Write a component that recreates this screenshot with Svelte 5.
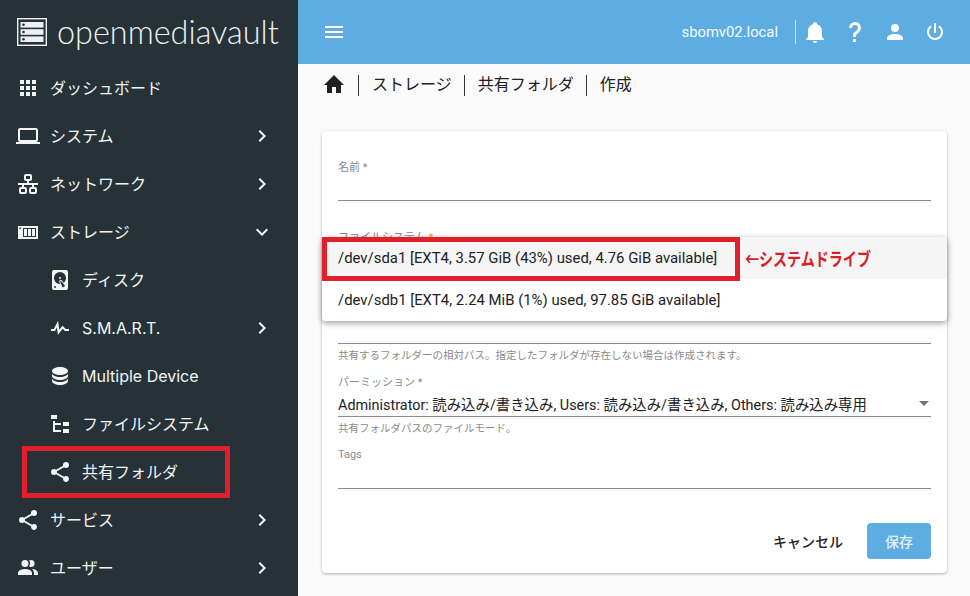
<script lang="ts">
	const ICONS: Record<string, string> = {
		apps: 'M16,20H20V16H16M16,14H20V10H16M10,8H14V4H10M16,8H20V4H16M10,14H14V10H10M4,14H8V10H4M4,20H8V16H4M10,20H14V16H10M4,8H8V4H4V8Z',
		laptop: 'M4,6H20V16H4M20,18A2,2 0 0,0 22,16V6C22,4.89 21.1,4 20,4H4C2.89,4 2,4.89 2,6V16A2,2 0 0,0 4,18H0V20H24V18H20Z',
		lan: 'M10,2C8.89,2 8,2.89 8,4V7C8,8.11 8.89,9 10,9H11V11H2V13H6V15H5C3.89,15 3,15.89 3,17V20C3,21.11 3.89,22 5,22H9C10.11,22 11,21.11 11,20V17C11,15.89 10.11,15 9,15H8V13H16V15H15C13.89,15 13,15.89 13,17V20C13,21.11 13.89,22 15,22H19C20.11,22 21,21.11 21,20V17C21,15.89 20.11,15 19,15H18V13H22V11H13V9H14C15.11,9 16,8.11 16,7V4C16,2.89 15.11,2 14,2H10M10,4H14V7H10V4M5,17H9V20H5V17M15,17H19V20H15V17Z',
		storage: 'M2,6H22V19H2Z M7,8H20V17H7Z M8,9H11V16H8Z M12,9H15V16H12Z M16,9H19V16H16Z M3.5,7.5H5V9H3.5Z',
		disk: 'M6,2H18A2,2 0 0,1 20,4V20A2,2 0 0,1 18,22H6A2,2 0 0,1 4,20V4A2,2 0 0,1 6,2M12,4A6,6 0 0,0 6,10C6,13.31 8.69,16 12.1,16L11.22,13.77C10.95,13.29 11.11,12.68 11.59,12.4L12.45,11.9C12.93,11.63 13.54,11.79 13.82,12.27L15.74,14.69C17.12,13.59 18,11.9 18,10A6,6 0 0,0 12,4M12,9A1,1 0 0,1 13,10A1,1 0 0,1 12,11A1,1 0 0,1 11,10A1,1 0 0,1 12,9M7,18A1,1 0 0,0 6,19A1,1 0 0,0 7,20A1,1 0 0,0 8,19A1,1 0 0,0 7,18M12.09,13.27L14.58,19.58L17.17,18.08L12.95,12.77L12.09,13.27Z',
		pulse: 'M3,13H5.79L10.1,4.79L11.28,13.75L14.5,9.66L17.83,13H21V15H17L14.67,12.67L9.92,18.73L8.94,11.31L7,15H3V13Z',
		database: 'M12,3C7.58,3 4,4.79 4,7C4,9.21 7.58,11 12,11C16.42,11 20,9.21 20,7C20,4.79 16.42,3 12,3M4,9V12C4,14.21 7.58,16 12,16C16.42,16 20,14.21 20,12V9C20,11.21 16.42,13 12,13C7.58,13 4,11.21 4,9M4,14V17C4,19.21 7.58,21 12,21C16.42,21 20,19.21 20,17V14C20,16.21 16.42,18 12,18C7.58,18 4,16.21 4,14Z',
		tree: 'M3,3H9V7H3V3M15,10H21V14H15V10M15,17H21V21H15V17M13,13H7V18H13V20H7L5,20V9H7V11H13V13Z',
		share: 'M18,16.08C17.24,16.08 16.56,16.38 16.04,16.85L8.91,12.7C8.96,12.47 9,12.24 9,12C9,11.76 8.96,11.53 8.91,11.3L15.96,7.19C16.5,7.69 17.21,8 18,8A3,3 0 0,0 21,5A3,3 0 0,0 18,2A3,3 0 0,0 15,5C15,5.24 15.04,5.47 15.09,5.7L8.04,9.81C7.5,9.31 6.79,9 6,9A3,3 0 0,0 3,12A3,3 0 0,0 6,15C6.79,15 7.5,14.69 8.04,14.19L15.16,18.34C15.11,18.55 15.08,18.77 15.08,19C15.08,20.61 16.39,21.91 18,21.91C19.61,21.91 20.92,20.61 20.92,19A2.92,2.92 0 0,0 18,16.08Z',
		users: 'M16 17V19H2V17S2 13 9 13 16 17 16 17M12.5 7.5A3.5 3.5 0 1 0 9 11A3.5 3.5 0 0 0 12.5 7.5M15.94 13A5.32 5.32 0 0 1 18 17V19H22V17S22 13.37 15.94 13M15 4A3.39 3.39 0 0 0 13.07 4.59A5 5 0 0 1 13.07 10.41A3.39 3.39 0 0 0 15 11A3.5 3.5 0 0 0 15 4Z',
		right: 'M8.59,16.58L13.17,12L8.59,7.41L10,6L16,12L10,18L8.59,16.58Z',
		down: 'M7.41,8.58L12,13.17L16.59,8.58L18,10L12,16L6,10L7.41,8.58Z',
		menu: 'M3,6H21V8H3V6M3,11H21V13H3V11M3,16H21V18H3V16Z',
		bell: 'M21,19V20H3V19L5,17V11C5,7.9 7.03,5.17 10,4.29C10,4.19 10,4.1 10,4A2,2 0 0,1 12,2A2,2 0 0,1 14,4C14,4.1 14,4.19 14,4.29C16.97,5.17 19,7.9 19,11V17L21,19M14,21A2,2 0 0,1 12,23A2,2 0 0,1 10,21',
		help: 'M10,19H13V22H10V19M12,2C17.35,2.22 19.68,7.62 16.5,11.67C15.67,12.67 14.33,13.33 13.67,14.17C13,15 13,16 13,17H10C10,15.33 10,13.92 10.67,12.92C11.33,11.92 12.67,11.33 13.5,10.67C15.92,8.43 15.32,5.26 12,5A3,3 0 0,0 9,8H6A6,6 0 0,1 12,2Z',
		account: 'M12,4A4,4 0 0,1 16,8A4,4 0 0,1 12,12A4,4 0 0,1 8,8A4,4 0 0,1 12,4M12,14C16.42,14 20,15.79 20,18V20H4V18C4,15.79 7.58,14 12,14Z',
		power: 'M16.56,5.44L15.11,6.89C16.84,7.94 18,9.83 18,12A6,6 0 0,1 12,18A6,6 0 0,1 6,12C6,9.83 7.16,7.94 8.88,6.88L7.44,5.44C5.36,6.88 4,9.28 4,12A8,8 0 0,0 12,20A8,8 0 0,0 20,12C20,9.28 18.64,6.88 16.56,5.44M13,3H11V13H13',
		home: 'M10,20V14H14V20H19V12H22L12,2L2,12H5V20H10Z'
	};

	const nav = [
		{ label: 'ダッシュボード', icon: 'apps' },
		{ label: 'システム', icon: 'laptop', arrow: 'right' },
		{ label: 'ネットワーク', icon: 'lan', arrow: 'right' },
		{ label: 'ストレージ', icon: 'storage', arrow: 'down' },
		{ label: 'ディスク', icon: 'disk', sub: true },
		{ label: 'S.M.A.R.T.', icon: 'pulse', sub: true, arrow: 'right', latin: true },
		{ label: 'Multiple Device', icon: 'database', sub: true, latin: true },
		{ label: 'ファイルシステム', icon: 'tree', sub: true },
		{ label: '共有フォルダ', icon: 'share', sub: true },
		{ label: 'サービス', icon: 'share', arrow: 'right' },
		{ label: 'ユーザー', icon: 'users', arrow: 'right' }
	];

	const crumbs = ['ストレージ', '共有フォルダ', '作成'];
</script>

{#snippet icon(name: string, cls = '')}
	<svg class="icon {cls}" viewBox="0 0 24 24" aria-hidden="true"><path fill-rule="evenodd" d={ICONS[name]} /></svg>
{/snippet}

<div class="page">
	<aside class="sidebar">
		<div class="brand">
			<svg class="logo" viewBox="0 0 30 28" aria-hidden="true">
				<rect x="0.7" y="0.7" width="28.6" height="26.6" fill="none" stroke="#eef1f2" stroke-width="1.4" />
				<rect x="3.5" y="4" width="23" height="5.6" fill="#eef1f2" />
				<rect x="3.5" y="11.2" width="23" height="5.6" fill="#eef1f2" />
				<rect x="3.5" y="18.4" width="23" height="5.6" fill="#eef1f2" />
				<circle cx="6.5" cy="6.8" r="1.3" fill="#263238" />
				<circle cx="6.5" cy="14" r="1.3" fill="#263238" />
				<circle cx="6.5" cy="21.2" r="1.3" fill="#263238" />
			</svg>
			<span class="brand-name">openmediavault</span>
		</div>
		<nav>
			{#each nav as item}
				<div class="nav-row" class:sub={item.sub}>
					{@render icon(item.icon, 'nav-icon')}
					<span class="nav-label" class:latin={item.latin}>{item.label}</span>
					{#if item.arrow}
						{@render icon(item.arrow, 'nav-arrow')}
					{/if}
				</div>
			{/each}
		</nav>
		<div class="mark mark-nav"></div>
	</aside>

	<main class="main">
		<header class="topbar">
			{@render icon('menu', 'top-menu')}
			<span class="host">sbomv02.local</span>
			<span class="top-sep"></span>
			{@render icon('bell', 'top-bell')}
			{@render icon('help', 'top-icon')}
			{@render icon('account', 'top-icon')}
			{@render icon('power', 'top-icon')}
		</header>

		<div class="crumbs">
			{@render icon('home', 'home')}
			{#each crumbs as crumb}
				<span class="crumb"><span class="crumb-text">{crumb}</span></span>
			{/each}
		</div>

		<section class="card">
			<div class="field f-name">
				<span class="label">名前 *</span>
				<div class="line"></div>
			</div>
			<div class="field f-fs">
				<span class="label">ファイルシステム <em>*</em></span>
			</div>
			<div class="field f-path">
				<div class="line"></div>
				<span class="hint">共有するフォルダーの相対パス。指定したフォルダが存在しない場合は作成されます。</span>
			</div>
			<div class="field f-perm">
				<span class="label">パーミッション *</span>
				<div class="select">
					<span>Administrator: 読み込み/書き込み, Users: 読み込み/書き込み, Others: 読み込み専用</span>
					<i class="caret"></i>
				</div>
				<div class="line"></div>
				<span class="hint">共有フォルダパスのファイルモード。</span>
			</div>
			<div class="field f-tags">
				<span class="label">Tags</span>
				<div class="line"></div>
			</div>
			<div class="actions">
				<button type="button" class="cancel">キャンセル</button>
				<button type="button" class="save">保存</button>
			</div>

			<div class="dropdown">
				<div class="option active">/dev/sda1 [EXT4, 3.57 GiB (43%) used, 4.76 GiB available]</div>
				<div class="option">/dev/sdb1 [EXT4, 2.24 MiB (1%) used, 97.85 GiB available]</div>
			</div>
			<div class="mark mark-option"></div>
			<span class="note">←システムドライブ</span>
		</section>
	</main>
</div>

<style>
	:global(body) {
		margin: 0;
		background: #fafafa;
	}

	.page {
		display: flex;
		width: 970px;
		height: 596px;
		overflow: hidden;
		font-family: Roboto, 'Noto Sans CJK JP', sans-serif;
	}

	.icon {
		display: block;
		fill: currentColor;
		flex: none;
	}

	.sidebar {
		position: relative;
		flex: none;
		width: 298px;
		background: #263238;
		color: #f2f5f6;
	}

	.brand {
		display: flex;
		align-items: center;
		gap: 10px;
		height: 64px;
		padding-left: 17px;
	}

	.logo {
		width: 30px;
		height: 28px;
		flex: none;
	}

	.brand-name {
		font-family: Lato, sans-serif;
		font-weight: 300;
		font-size: 32.4px;
		line-height: 1;
		color: #eef1f2;
	}

	.nav-row {
		display: flex;
		align-items: center;
		height: 48px;
		padding-left: 16px;
		font-family: Inter, 'Noto Sans CJK JP', sans-serif;
		font-size: 16px;
	}

	.nav-row.sub {
		padding-left: 48px;
	}

	:global(.nav-icon) {
		width: 24px;
		height: 24px;
	}

	.nav-label {
		margin-left: 10px;
		padding-bottom: 2px;
		flex: 1;
	}

	.nav-label.latin {
		padding-bottom: 0;
	}

	:global(.nav-arrow) {
		width: 24px;
		height: 24px;
		margin-right: 24px;
	}

	.mark {
		position: absolute;
		box-sizing: border-box;
		border: 5px solid #e0202c;
		pointer-events: none;
	}

	.mark-nav {
		left: 22px;
		top: 446px;
		width: 208px;
		height: 52px;
	}

	.main {
		flex: 1;
		min-width: 0;
	}

	.topbar {
		display: flex;
		align-items: center;
		height: 64px;
		padding: 0 23px 0 24px;
		background: #5dade2;
		color: #fff;
	}

	:global(.top-menu) {
		width: 24px;
		height: 24px;
		margin-right: auto;
	}

	.host {
		font-size: 14.8px;
		color: #f4f9fd;
	}

	.top-sep {
		width: 1px;
		height: 24px;
		margin: 0 7px 0 17px;
		background: rgb(255 255 255 / 0.7);
	}

	:global(.top-bell) {
		width: 24px;
		height: 24px;
	}

	:global(.top-icon) {
		width: 24px;
		height: 24px;
		margin-left: 16px;
	}

	.crumbs {
		display: flex;
		align-items: center;
		height: 42px;
		padding-left: 24px;
		color: #212121;
		font-size: 16px;
	}

	:global(.home) {
		width: 24px;
		height: 24px;
		margin-right: 12px;
	}

	.crumb {
		padding: 0 12px 0 13px;
		line-height: 21px;
		border-left: 1px solid #333;
	}

	.crumb-text {
		display: block;
		margin-top: -1px;
		margin-bottom: 1px;
	}

	.card {
		position: relative;
		box-sizing: border-box;
		width: 625px;
		height: 442px;
		margin: 25px 0 0 24px;
		padding: 0 16px;
		background: #fff;
		border-radius: 4px;
		box-shadow: 0 1px 3px rgb(0 0 0 / 0.3);
	}

	.field {
		display: flex;
		flex-direction: column;
	}

	.label {
		font-size: 11px;
		line-height: 14px;
		color: #8a8a8a;
	}

	.label em {
		font-style: normal;
		color: #f0a030;
	}

	.line {
		height: 1px;
		background: #8c8c8c;
	}

	.hint {
		margin-top: 5px;
		font-size: 10.5px;
		line-height: 14px;
		color: #8a8a8a;
	}

	.f-name {
		padding-top: 30px;
	}

	.f-name .line {
		margin-top: 25px;
	}

	.f-fs {
		padding-top: 30px;
	}

	.f-path {
		padding-top: 98px;
	}

	.f-perm {
		padding-top: 13px;
	}

	.select {
		display: flex;
		align-items: center;
		justify-content: space-between;
		height: 25px;
		margin-top: 1px;
		font-size: 14.4px;
		color: #212121;
	}

	.caret {
		width: 0;
		height: 0;
		margin-right: 2px;
		border: 5px solid transparent;
		border-top-color: #757575;
		border-bottom-width: 0;
	}

	.f-tags {
		padding-top: 12px;
	}

	.f-tags .line {
		margin-top: 26px;
	}

	.actions {
		display: flex;
		justify-content: flex-end;
		align-items: center;
		gap: 16px;
		margin-top: 34px;
	}

	button {
		height: 36px;
		border: none;
		border-radius: 4px;
		font-family: inherit;
		font-size: 14px;
		font-weight: 500;
	}

	.cancel {
		padding: 0 8px;
		background: transparent;
		color: #212121;
	}

	.save {
		width: 64px;
		padding: 0;
		background: #5dade2;
		color: #e4f1fa;
	}

	.dropdown {
		position: absolute;
		left: 0;
		top: 106px;
		width: 625px;
		height: 84px;
		background: #fff;
		border-radius: 4px;
		box-shadow: 0 2px 6px rgb(0 0 0 / 0.4);
		overflow: hidden;
	}

	.option {
		display: flex;
		align-items: center;
		height: 42px;
		padding-left: 16px;
		font-size: 14.9px;
		color: #212121;
	}

	.option.active {
		background: #f5f5f5;
	}

	.mark-option {
		left: 0;
		top: 106px;
		width: 418px;
		height: 44px;
	}

	.note {
		position: absolute;
		left: 423px;
		top: 114px;
		font-family: 'Noto Sans CJK JP', sans-serif;
		font-size: 18px;
		font-weight: 700;
		line-height: 26px;
		white-space: nowrap;
		transform: scaleX(0.78);
		transform-origin: left center;
		color: #d8202c;
	}
</style>
